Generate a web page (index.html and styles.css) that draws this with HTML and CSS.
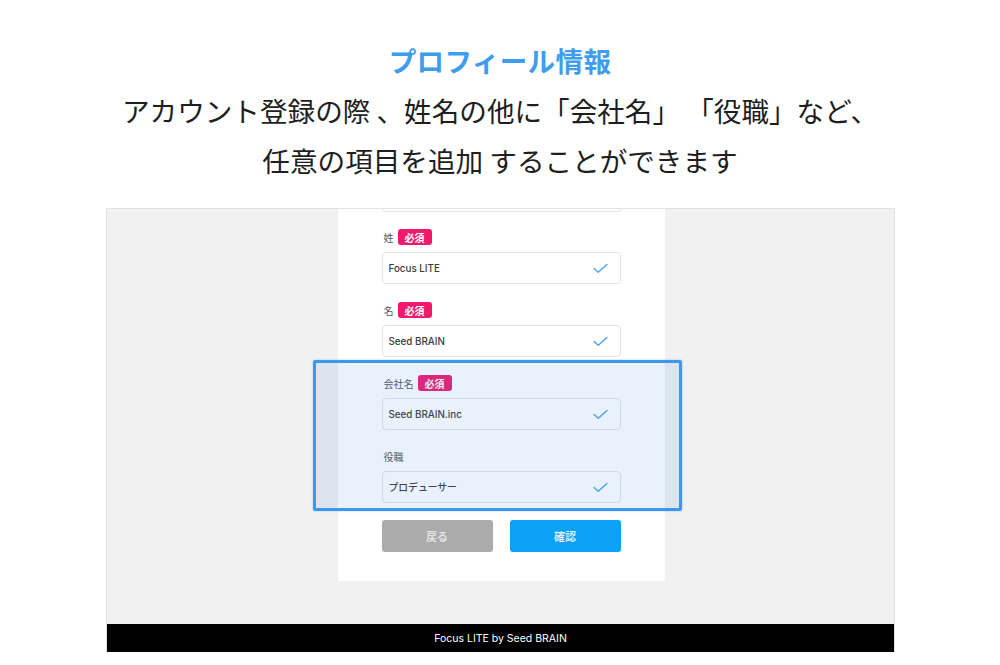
FILE: index.html
```html
<!DOCTYPE html>
<html lang="ja">
<head>
<meta charset="utf-8">
<title>プロフィール情報</title>
<link rel="stylesheet" href="styles.css">
</head>
<body>
  <header class="intro">
    <h1 class="intro-title">プロフィール情報</h1>
    <p class="intro-line">アカウント登録の際 、姓名の他に「会社名」 「役職」など、</p>
    <p class="intro-line">任意の項目を追加 することができます</p>
  </header>

  <section class="screen">
    <div class="screen-body">
      <div class="card">
        <div class="field-stub"></div>

        <div class="field field-first">
          <div class="field-label">姓<span class="badge">必須</span></div>
          <div class="input">
            <span class="input-value">Focus LITE</span>
            <svg class="check" viewBox="0 0 16 11" width="15" height="11"><path d="M1.2 5.6 L5.6 9.6 L14.8 1.2" fill="none" stroke="#4aa3ea" stroke-width="1.5" stroke-linecap="round" stroke-linejoin="round"/></svg>
          </div>
        </div>

        <div class="field">
          <div class="field-label">名<span class="badge">必須</span></div>
          <div class="input">
            <span class="input-value">Seed BRAIN</span>
            <svg class="check" viewBox="0 0 16 11" width="15" height="11"><path d="M1.2 5.6 L5.6 9.6 L14.8 1.2" fill="none" stroke="#4aa3ea" stroke-width="1.5" stroke-linecap="round" stroke-linejoin="round"/></svg>
          </div>
        </div>

        <div class="field-group">
          <div class="field">
            <div class="field-label">会社名<span class="badge">必須</span></div>
            <div class="input">
              <span class="input-value">Seed BRAIN.inc</span>
              <svg class="check" viewBox="0 0 16 11" width="15" height="11"><path d="M1.2 5.6 L5.6 9.6 L14.8 1.2" fill="none" stroke="#4aa3ea" stroke-width="1.5" stroke-linecap="round" stroke-linejoin="round"/></svg>
            </div>
          </div>

          <div class="field">
            <div class="field-label">役職</div>
            <div class="input">
              <span class="input-value">プロデューサー</span>
              <svg class="check" viewBox="0 0 16 11" width="15" height="11"><path d="M1.2 5.6 L5.6 9.6 L14.8 1.2" fill="none" stroke="#4aa3ea" stroke-width="1.5" stroke-linecap="round" stroke-linejoin="round"/></svg>
            </div>
          </div>

          <div class="focus-frame"></div>
        </div>

        <div class="actions">
          <button class="btn btn-back" type="button">戻る</button>
          <button class="btn btn-confirm" type="button">確認</button>
        </div>
      </div>
    </div>
    <footer class="screen-footer">Focus LITE by Seed BRAIN</footer>
  </section>
</body>
</html>
```

FILE: styles.css
```css
* {
  box-sizing: border-box;
}

html,
body {
  margin: 0;
  padding: 0;
  background: #ffffff;
}

body {
  font-family: "Noto Sans CJK JP", "Noto Sans", sans-serif;
  color: #222222;
  width: 1000px;
  height: 665px;
  overflow: hidden;
}

/* Heading block */
.intro {
  padding-top: 42px;
  display: flex;
  flex-direction: column;
  align-items: center;
}

.intro-title {
  margin: 0;
  font-size: 27.6px;
  line-height: 36px;
  font-weight: 700;
  color: #3f9ded;
  letter-spacing: 0.3px;
}

.intro-line {
  margin: 14px 0 0;
  font-size: 27.6px;
  line-height: 36px;
  font-weight: 400;
  color: #1e1e1e;
  white-space: pre;
}

.intro-line + .intro-line {
  margin-top: 14px;
}

/* Embedded app screen */
.screen {
  margin: 30px 0 0 106px;
  width: 789px;
  height: 444px;
  display: flex;
  flex-direction: column;
  border: 1px solid #e2e2e2;
  border-bottom: none;
}

.screen-body {
  flex: 1;
  background: #f1f1f1;
  overflow: hidden;
  display: flex;
  justify-content: center;
}

.card {
  width: 327px;
  height: 372px;
  background: #ffffff;
  padding: 0 44px;
  margin-left: 1px;
  display: flex;
  flex-direction: column;
}

.field-stub {
  height: 3px;
  border: 1px solid #e6e6e6;
  border-top: none;
  border-radius: 0 0 4px 4px;
}

.field {
  display: flex;
  flex-direction: column;
  gap: 7px;
  margin-top: 18px;
}

.field-first {
  margin-top: 17px;
}

.field-label {
  height: 16px;
  display: flex;
  align-items: center;
  gap: 4px;
  font-size: 10px;
  color: #555555;
  padding-left: 2px;
}

.badge {
  display: inline-flex;
  align-items: center;
  justify-content: center;
  height: 16px;
  padding: 0 7px;
  border-radius: 3px;
  background: #f0196e;
  color: #ffffff;
  font-size: 10px;
  font-weight: 700;
}

.input {
  height: 32px;
  border: 1px solid #e3e3e3;
  border-radius: 4px;
  background: #ffffff;
  display: flex;
  align-items: center;
  justify-content: space-between;
  padding: 0 12px 0 6px;
}

.input-value {
  font-family: "Inter", "Noto Sans CJK JP", sans-serif;
  font-size: 9.8px;
  font-weight: 500;
  color: #3a3a3a;
}

.check {
  display: block;
}

/* Highlighted group of optional fields */
.field-group {
  position: relative;
}

.focus-frame {
  position: absolute;
  top: 3px;
  bottom: -8px;
  left: -69px;
  right: -61px;
  border: 3px solid #3d97ea;
  border-radius: 2px;
  background: rgba(70, 150, 230, 0.12);
  box-shadow: 0 0 2px rgba(61, 151, 234, 0.5);
}

.actions {
  margin-top: 17px;
  display: flex;
  justify-content: space-between;
}

.btn {
  width: 111px;
  height: 32px;
  border: none;
  border-radius: 3px;
  font-family: "Noto Sans CJK JP", sans-serif;
  font-size: 11px;
  font-weight: 700;
  padding: 0;
}

.btn-back {
  background: #ababab;
  color: #e4e4e4;
}

.btn-confirm {
  background: #0ca0f7;
  color: #d9f0ff;
}

.screen-footer {
  height: 28px;
  background: #000000;
  color: #ffffff;
  font-family: "Inter", "Noto Sans", sans-serif;
  font-size: 10.5px;
  display: flex;
  align-items: center;
  justify-content: center;
}
```
